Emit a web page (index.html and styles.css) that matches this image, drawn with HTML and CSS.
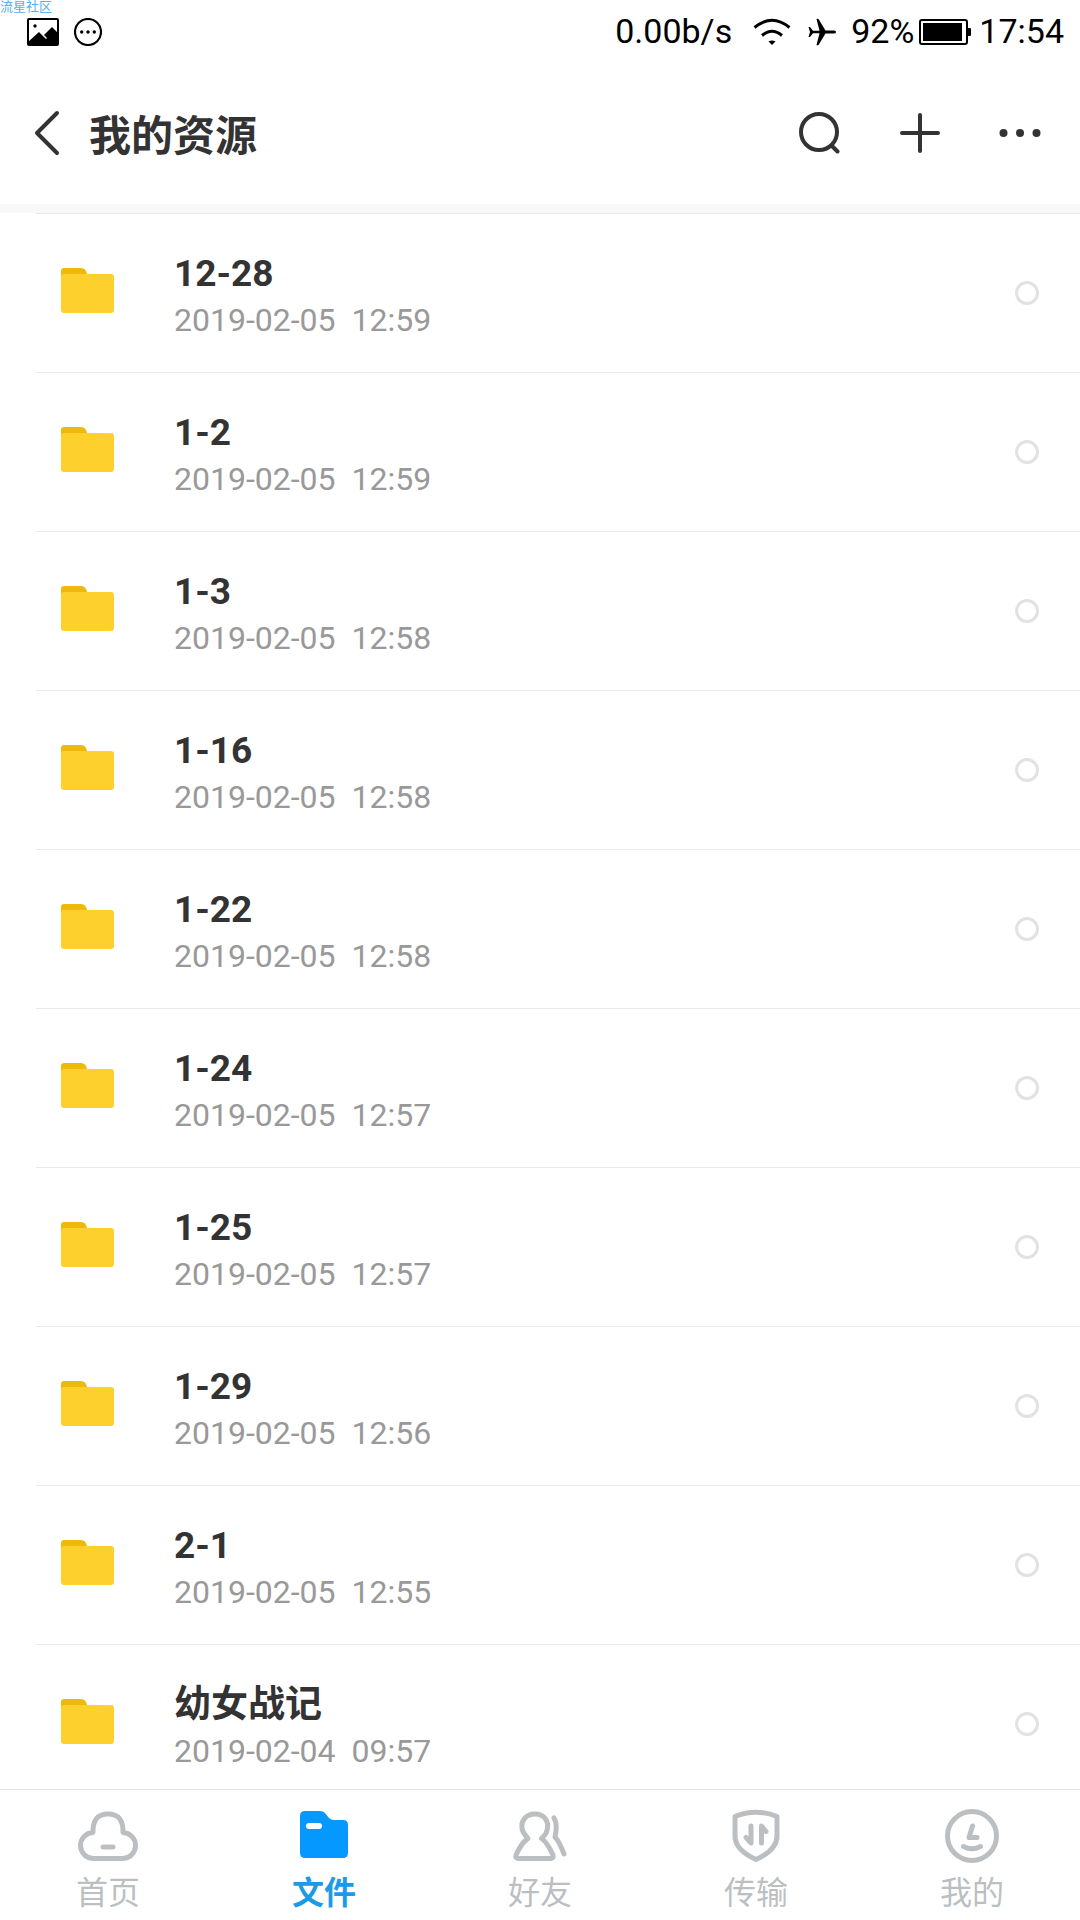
FILE: index.html
```
<!DOCTYPE html>
<html lang="zh-CN">
<head>
<meta charset="utf-8">
<meta name="viewport" content="width=device-width, initial-scale=1">
<title>我的资源</title>
<link rel="stylesheet" href="styles.css">
</head>
<body>
<div class="app">
  <span class="watermark">流星社区</span>
  <div class="status">
    <div class="status-left">
      <svg width="32" height="28" viewBox="0 0 32 28"><rect x="1" y="1" width="30" height="26" rx="1" fill="none" stroke="#000" stroke-width="2"/><circle cx="8" cy="8" r="1.7"/><path d="M1 24L12 14L17 19L19 21L20 20L17 17L25 9L31 15V27H1Z"/></svg>
      <svg width="28" height="28" viewBox="0 0 28 28"><circle cx="14" cy="14" r="13" fill="none" stroke="#000" stroke-width="2.2"/><circle cx="7.7" cy="14" r="1.7"/><circle cx="14" cy="14" r="1.7"/><circle cx="20.3" cy="14" r="1.7"/></svg>
    </div>
    <div class="status-right">
      <span class="reading">0.00b/s</span>
      <svg class="wifi" width="38" height="28" viewBox="0 0 38 28"><path d="M1.500 9.500Q19 -5 36.500 9.500M9 17.500Q19 9 29 17.500" fill="none" stroke="#000" stroke-width="3"/><path d="M15.500 23.500Q19 21.500 22.500 23.500L19 27Z"/></svg>
      <svg class="plane" width="28" height="28" viewBox="0 0 28 28"><path d="M0.500 9H2L5 12.700H11.500L8.500 1Q9.500 .5 10.500 1L17.500 12.500H26Q28 12.500 28 14T26 15.500H17.500L10.500 27Q9.500 27.500 8.500 27L11.500 15.300H5L2 19H.5L2 14Z"/></svg>
      <span class="reading">92%</span>
      <svg class="battery" width="52" height="26" viewBox="0 0 52 26"><rect x="1" y="1" width="47" height="24" rx="2" fill="none" stroke="#000" stroke-width="2"/><rect x="4" y="4" width="39" height="18"/><path d="M49 9H51Q52 9 52 10V16Q52 17 51 17H49Z"/></svg>
      <span class="reading">17:54</span>
    </div>
  </div>
  <header class="header">
    <button class="icon-btn" aria-label="返回"><svg width="26" height="46" viewBox="0 0 26 46"><path d="M23 3L3 23L23 43" fill="none" stroke="#333" stroke-width="4" stroke-linecap="round" stroke-linejoin="round"/></svg></button>
    <h1 class="title">我的资源</h1>
    <div class="actions">
      <button class="icon-btn" aria-label="搜索"><svg width="42" height="42" viewBox="0 0 42 42"><g fill="none" stroke="#333" stroke-width="4" stroke-linecap="round"><circle cx="20" cy="20" r="18"/><path d="M33 34L38.500 39.500"/></g></svg></button>
      <button class="icon-btn" aria-label="新建"><svg width="42" height="42" viewBox="0 0 42 42"><path d="M21 3V39M3 21H39" fill="none" stroke="#333" stroke-width="4" stroke-linecap="round"/></svg></button>
      <button class="icon-btn" aria-label="更多"><svg width="42" height="42" viewBox="0 0 42 42"><g fill="#333"><circle cx="4.500" cy="21" r="4"/><circle cx="21" cy="21" r="4"/><circle cx="37.500" cy="21" r="4"/></g></svg></button>
    </div>
  </header>
  <main class="content">
    <ul class="list" id="list"></ul>
  </main>
  <nav class="tabs">
    <a class="tab" href="#home"><svg width="60" height="54" viewBox="0 0 60 54"><g fill="none" stroke="#bcbfc2" stroke-width="5" stroke-linejoin="round"><path d="M16 49.500H44A13 13 0 0 0 45 23.500Q45.500 5 30 5T15 23.500A13 13 0 0 0 16 49.500Z"/><path d="M25 38H35" stroke-linecap="round"/></g></svg><span>首页</span></a>
    <a class="tab active" href="#files" aria-current="page"><svg width="60" height="54" viewBox="0 0 60 54"><path d="M11 2H26Q29 2 31 4L35 9Q37 11 40 11H49Q54 11 54 16V44Q54 49 49 49H11Q6 49 6 44V7Q6 2 11 2Z" fill="#0599ff"/><path d="M15 17H25" stroke="#fff" stroke-width="6" stroke-linecap="round"/></svg><span>文件</span></a>
    <a class="tab" href="#friends"><svg width="60" height="54" viewBox="0 0 60 54"><g fill="none" stroke="#bcbfc2" stroke-width="5" stroke-linecap="round" stroke-linejoin="round"><path d="M25 5C15 5 11 13 12 19C12.500 24 15 26 18 29.500Q12 33 6 46Q5 49.500 8 49.500H41Q44 49.500 43 46Q37 33 31.500 29.500C35 26 37 24 37.500 19C38.500 13 35 5 25 5Z"/><path d="M44 9Q47 14 46 22L45 28Q49 32 54 45"/></g></svg><span>好友</span></a>
    <a class="tab" href="#transfer"><svg width="60" height="54" viewBox="0 0 60 54"><g fill="none" stroke="#bcbfc2" stroke-width="5" stroke-linecap="round" stroke-linejoin="round"><path d="M9 7.500Q30 -1 51 7.500V27Q51 41 30 50.500Q9 41 9 27Z"/><path d="M25 17V34L20 28.500M35.500 34V17L40 22.500"/></g></svg><span>传输</span></a>
    <a class="tab" href="#me"><svg width="60" height="54" viewBox="0 0 60 54"><g fill="none" stroke="#bcbfc2" stroke-width="5" stroke-linecap="round" stroke-linejoin="round"><circle cx="30" cy="27" r="24.500"/><path d="M30.500 17L27 28.500H35M21.500 37.500Q30 42 38.500 37.500"/></g></svg><span>我的</span></a>
  </nav>
</div>
<script src="app.js"></script>
</body>
</html>
```
FILE: styles.css
```
* { box-sizing: border-box; }
body {
  margin: 0;
  background: #fff;
  font-family: Roboto, "Noto Sans CJK SC", sans-serif;
  color: #333;
}
.app { display: flex; flex-direction: column; height: 100vh; }
.watermark {
  position: absolute; top: 0; left: 0;
  font-size: 13px; line-height: 13px; color: #55aef2;
}
.status {
  display: flex; justify-content: space-between; align-items: center;
  flex: none; height: 64px; padding: 0 16px 0 27px;
  font-size: 34px; line-height: 40px; color: #000;
}
.status-left, .status-right { display: flex; align-items: center; }
.status-left { gap: 15px; }
.reading { padding-bottom: 2px; }
.wifi { margin: 0 17px 0 21px; }
.plane { margin-right: 15px; }
.battery { margin: 0 8px 0 5px; }
.header {
  display: flex; align-items: center;
  flex: none; height: 140px; padding: 0 39px 2px 34px;
}
.icon-btn { display: block; padding: 0; border: 0; background: none; }
.icon-btn svg, .status svg, .tab svg, .folder { display: block; }
.title { margin: 0 auto 0 29px; padding-top: 8px; font-size: 42px; line-height: 60px; font-weight: 700; }
.actions { display: flex; gap: 58px; }
.content {
  flex: 1; min-height: 0; overflow-y: auto; scrollbar-width: none;
  border-top: 9px solid #f8f8f8;
}
.list { margin: 0; padding: 0 0 0 36px; list-style: none; }
.row {
  display: flex; align-items: center;
  height: 159px; padding: 0 41px 0 24px;
  border-top: 1px solid #e9e9e9;
}
.folder { margin: 0 60px 6px 0; }
.info { flex: 1; display: flex; flex-direction: column; gap: 2px; padding-top: 4px; }
.name { font-size: 37px; line-height: 48px; font-weight: 700; }
.date { font-size: 32px; line-height: 40px; color: #999; white-space: pre; }
.check {
  appearance: none; width: 24px; height: 24px; margin: 0;
  border: 3px solid #e2e2e2; border-radius: 50%; background: #fff;
}
.check:checked { border-color: #0599ff; background: #0599ff; }
.tabs {
  display: flex; flex: none; height: 131px; padding-top: 19px;
  border-top: 1px solid #e6e6e6; background: #fff;
}
.tab {
  flex: 1; display: flex; flex-direction: column; align-items: center; gap: 6px;
  font-size: 32px; line-height: 48px; color: #bcbfc2; text-decoration: none;
}
.active { color: #1b9ae8; font-weight: 700; }
```
FILE: app.js
```
const items = [
  ["12-28", "2019-02-05  12:59"],
  ["1-2", "2019-02-05  12:59"],
  ["1-3", "2019-02-05  12:58"],
  ["1-16", "2019-02-05  12:58"],
  ["1-22", "2019-02-05  12:58"],
  ["1-24", "2019-02-05  12:57"],
  ["1-25", "2019-02-05  12:57"],
  ["1-29", "2019-02-05  12:56"],
  ["2-1", "2019-02-05  12:55"],
  ["幼女战记", "2019-02-04  09:57"]
];
document.getElementById("list").innerHTML = items.map(([name, date], i) => `
  <li class="row">
    <svg class="folder" width="54" height="46" viewBox="0 0 54 46"><path d="M1 12V4Q1 1 4 1H21Q26 1 27 7V12Z" fill="#edb90b"/><rect x="1" y="7" width="53" height="39" rx="3" fill="#fdd02e"/></svg>
    <label class="info" for="item-${i}"><span class="name">${name}</span><span class="date">${date}</span></label>
    <input class="check" type="checkbox" id="item-${i}">
  </li>`).join("");
```
